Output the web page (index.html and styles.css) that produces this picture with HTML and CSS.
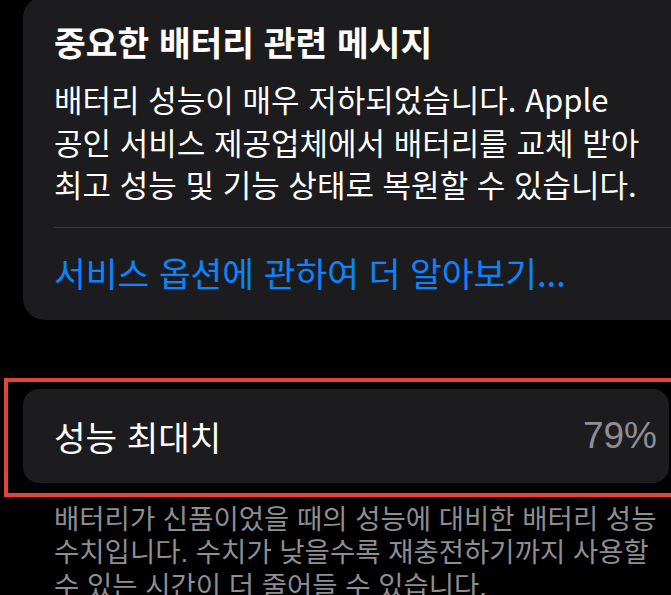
FILE: index.html
```html
<!DOCTYPE html>
<html lang="ko">
<head>
    <meta charset="utf-8">
    <title>배터리 성능 상태</title>
    <link rel="stylesheet" href="styles.css">
</head>
<body>
    <div class="card notice">
        <h2 class="notice-title">중요한 배터리 관련 메시지</h2>
        <p class="notice-text">배터리 성능이 매우 저하되었습니다. Apple<br>공인 서비스 제공업체에서 배터리를 교체 받아<br>최고 성능 및 기능 상태로 복원할 수 있습니다.</p>
        <div class="divider"></div>
        <a class="notice-link" href="#">서비스 옵션에 관하여 더 알아보기...</a>
    </div>

    <div class="highlight">
        <div class="card row">
            <span class="row-label">성능 최대치</span>
            <span class="row-value">79%</span>
        </div>
    </div>

    <p class="footnote">배터리가 신품이었을 때의 성능에 대비한 배터리 성능<br>수치입니다. 수치가 낮을수록 재충전하기까지 사용할<br>수 있는 시간이 더 줄어들 수 있습니다.</p>
</body>
</html>
```

FILE: styles.css
```css
html, body { margin: 0; padding: 0; background: #000; }
body { width: 671px; height: 595px; overflow: hidden; font-family: "Noto Sans CJK KR", "Noto Sans", sans-serif; color: #fff; }

.card { background: #1c1c1e; }

.notice { margin: -4px 0 0 23px; width: 680px; padding: 25px 0 27px 31px; border-radius: 22px; box-sizing: border-box; }
.notice-title { margin: 0; font-size: 34.5px; font-weight: 700; line-height: 40px; }
.notice-text { margin: 17px 0 0; font-size: 31px; line-height: 42.5px; white-space: nowrap; }
.divider { height: 1px; background: #38383a; margin: 21px 0 0; }
.notice-link { display: block; margin-top: 24px; font-size: 34.5px; line-height: 41px; color: #0a84ff; text-decoration: none; }

/* red frame drawn round the row */
.highlight { margin: 58px 0 0 4px; width: 700px; border: 4px solid #e8433a; padding: 7px 0 10px 15px; box-sizing: border-box; }
.row { width: 646px; height: 94px; border-radius: 16px; display: flex; align-items: center; justify-content: space-between; padding: 0 12px 0 31px; box-sizing: border-box; }
.row-label { font-size: 34.3px; }
.row-value { font-family: "Liberation Sans", Arial, sans-serif; font-size: 37px; color: #8e8e93; }

.footnote { margin: 6px 0 0 54px; font-family: "Liberation Sans", "Noto Sans CJK KR", sans-serif; font-size: 27.5px; line-height: 33.5px; color: #8d8d92; white-space: nowrap; }
```
